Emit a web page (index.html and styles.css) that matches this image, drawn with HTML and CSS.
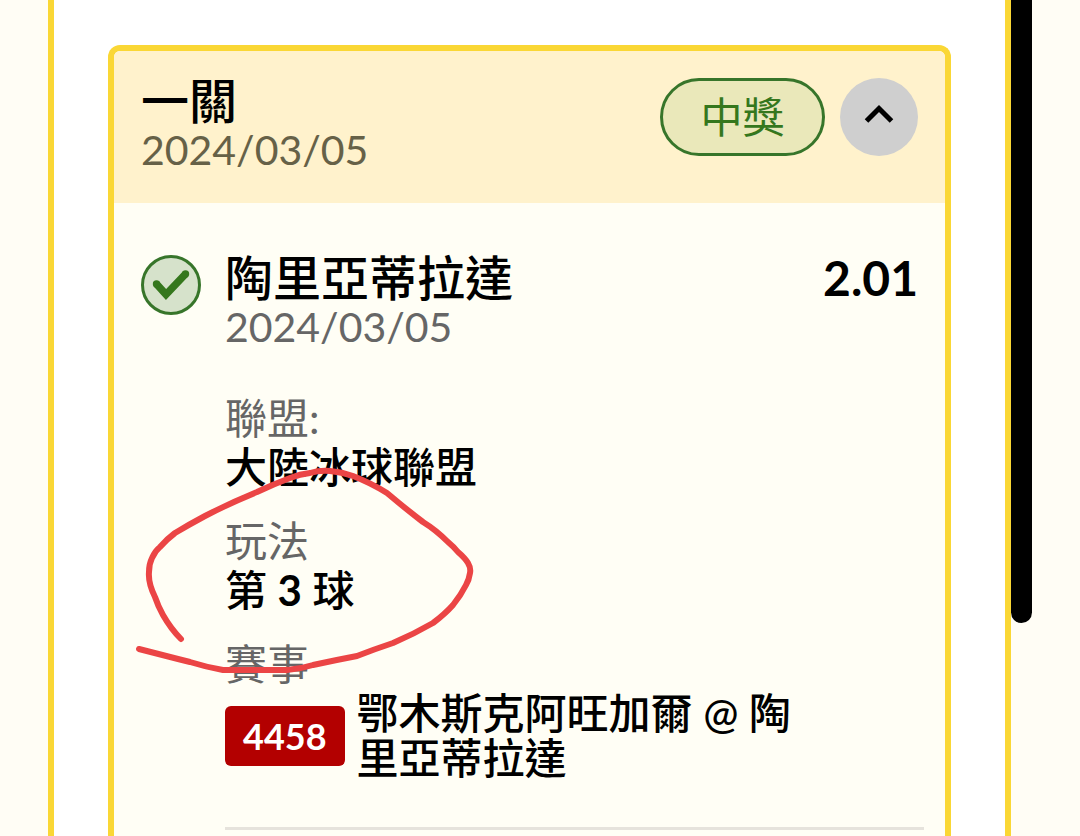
FILE: index.html
```html
<!DOCTYPE html>
<html lang="zh-Hant">
<head>
    <meta charset="UTF-8">
    <meta name="viewport" content="width=device-width, initial-scale=1.0">
    <title>投注紀錄</title>
    <link rel="stylesheet" href="styles.css">
</head>
<body>
    <div class="page">
        <main class="panel">
            <section class="ticket">
                <header class="ticket-header">
                    <div class="ticket-info">
                        <h2 class="title">一關</h2>
                        <p class="date">2024/03/05</p>
                    </div>
                    <span class="status">中獎</span>
                    <button class="toggle" type="button" aria-label="收合" aria-expanded="true">
                        <svg width="32" height="28" viewBox="0 0 32 28">
                            <path d="M3.500 18 L16 5.500 L28.500 18" fill="none" stroke="#000" stroke-width="5"/>
                        </svg>
                    </button>
                </header>

                <div class="bet">
                    <svg class="bet-icon" viewBox="0 0 60 60">
                        <circle cx="30" cy="30" r="28.500" fill="#d6e2cb" stroke="#37752a" stroke-width="3"/>
                        <path d="M15.500 29 L25 39.500 L44.500 19" fill="none" stroke="#35771d" stroke-width="7.500"/>
                        <circle cx="15.500" cy="29" r="3.700" fill="#35771d"/>
                        <circle cx="44.500" cy="19" r="3.700" fill="#35771d"/>
                    </svg>
                    <div class="bet-info">
                        <h3 class="title">陶里亞蒂拉達</h3>
                        <p class="date">2024/03/05</p>
                        <dl class="details">
                            <div class="detail">
                                <dt>聯盟:</dt>
                                <dd>大陸冰球聯盟</dd>
                            </div>
                            <div class="detail">
                                <dt>玩法</dt>
                                <dd>第 <b>3</b> 球</dd>
                            </div>
                            <div class="detail">
                                <dt>賽事</dt>
                                <dd class="match">
                                    <span class="match-code">4458</span>
                                    <span class="match-name">鄂木斯克阿旺加爾 @ 陶里亞蒂拉達</span>
                                </dd>
                            </div>
                        </dl>
                    </div>
                    <div class="odds">2.01</div>
                    <hr class="divider">
                </div>

                <!-- hand drawn mark around the play type -->
                <svg class="mark" width="350" height="220" viewBox="130 460 350 220" aria-hidden="true">
                    <path d="M181 639 Q171 629 163 615 Q158 606 155 597 Q148 583 149 572 Q149 564 152 558 Q155 551 160 547 Q167 539 175 533 Q190 524 205 516 Q230 503 257 492 Q274 484 290 478 Q300 474 310 473 Q320 470 330 471 Q342 472 353 476 Q371 483 387 493 L399 503 Q410 512 423 522 Q436 530 448 542 Q454 547 458 552 Q465 558 468 563 Q471 568 470 573 Q469 580 466 585 Q461 595 453 605 Q445 614 433 623 Q414 634 393 643 Q375 649 357 656 Q336 660 313 665 Q300 669 287 670 L223 670 Q206 667 190 662 L178 659 L139 649"/>
                </svg>
            </section>
        </main>
        <div class="scroll-thumb"></div>
    </div>
</body>
</html>
```

FILE: styles.css
```css
* {
    box-sizing: border-box;
}
body {
    margin: 0;
    font-family: Lato, "Noto Sans CJK TC", sans-serif;
    font-size: 42px;
    color: #000;
    background-color: #fffdf5;
}
h2, h3, p, dl, dd {
    margin: 0;
}
b {
    font-weight: 700;
}
.page {
    display: flex;
    height: 100vh;
    padding: 0 48px;
    overflow: hidden;
}
.panel {
    display: flex;
    flex: 1;
    padding: 45px 54px 0;
    background-color: white;
    border: solid #fad735;
    border-width: 0 6px;
}
.scroll-thumb {
    width: 21px;
    height: calc(75vh - 4px);
    background-color: black;
    border-radius: 0 0 11px 11px;
}
.ticket {
    position: relative;
    flex: 1;
    background-color: #fffef5;
    border: 6px solid #fad735;
    border-bottom: none;
    border-radius: 12px 12px 0 0;
}
.ticket-header {
    display: flex;
    align-items: flex-start;
    gap: 15px;
    padding: 27px 27px 29px;
    background-color: #fff2cc;
    border-radius: 6px 6px 0 0;
}
.ticket-info {
    flex: 1;
}
.title {
    margin-bottom: 2px;
    font-size: 48px;
    font-weight: 500;
    line-height: 46px;
}
.date {
    font-size: 41px;
    line-height: 48px;
    color: #666;
}
.ticket-header .date {
    color: #666147;
}
.status {
    width: 165px;
    height: 78px;
    line-height: 72px;
    text-align: center;
    color: #35771d;
    background-color: #eae8ba;
    border: 3px solid #37752a;
    border-radius: 39px;
}
.toggle {
    display: flex;
    align-items: center;
    justify-content: center;
    width: 78px;
    height: 78px;
    padding: 0;
    border: none;
    border-radius: 50%;
    background-color: #cfcfcf;
    cursor: pointer;
}
.bet {
    display: grid;
    grid-template-columns: 60px 1fr auto;
    column-gap: 24px;
    padding: 52px 27px;
}
.bet-icon {
    width: 60px;
    height: 60px;
}
.details {
    margin-top: 42px;
}
.detail {
    margin-bottom: 25px;
}
.detail dt {
    line-height: 50px;
    color: #666;
}
.detail dd {
    font-weight: 500;
    line-height: 48px;
}
.detail .match {
    display: flex;
    align-items: center;
    gap: 12px;
    padding-top: 2px;
    line-height: 45px;
}
.match-code {
    padding: 0 18px;
    font-size: 36px;
    font-weight: 700;
    line-height: 60px;
    color: white;
    background-color: #b30000;
    border-radius: 6px;
}
.match-name {
    flex: 1;
}
.odds {
    font-size: 48px;
    font-weight: 700;
    line-height: 46px;
}
.divider {
    grid-column: 2 / -1;
    width: auto;
    height: 3px;
    margin: 21px -6px 0 0;
    border: none;
    background-color: #e6e3dc;
}
.mark {
    position: absolute;
    top: 409px;
    left: 16px;
}
.mark path {
    fill: none;
    stroke: #eb4545;
    stroke-width: 6px;
    stroke-linecap: round;
    stroke-linejoin: round;
}
```
